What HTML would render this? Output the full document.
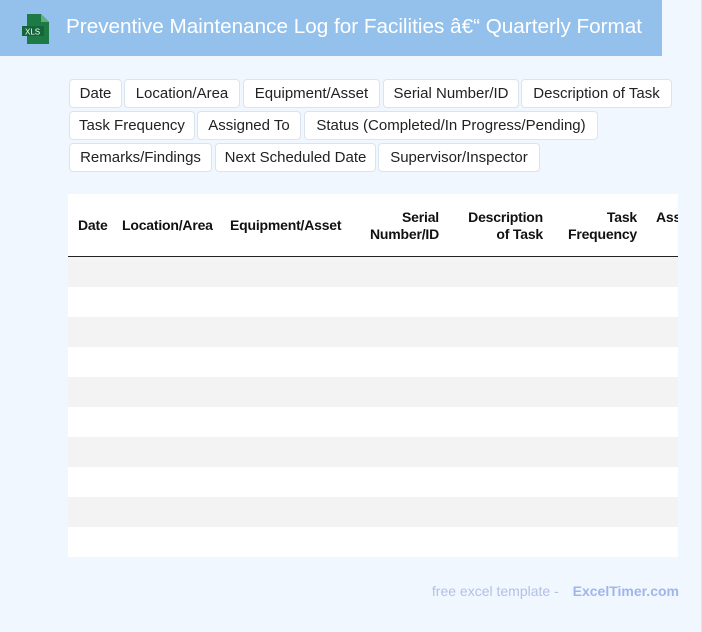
<!DOCTYPE html>
<html><head><meta charset="utf-8"><style>
*{margin:0;padding:0;box-sizing:border-box}
body{width:702px;height:632px;background:#f0f7ff;font-family:"Liberation Sans",Arial,sans-serif;position:relative;overflow:hidden;border-right:1px solid #dfe6ee}
.hdr{position:absolute;left:0;top:0;width:662px;height:56px;background:#93c1ec}
.hdr h1{position:absolute;left:66px;top:15px;color:#fff;font-weight:normal;font-size:20.7px;white-space:nowrap}
.tag{position:absolute;height:29px;background:#fff;border:1px solid #dbe4ee;border-radius:4px;font-size:15px;color:#222;line-height:27px;text-align:center;white-space:nowrap}
.tbl{position:absolute;left:68px;top:194px;width:610px;height:363px;background:#fff;overflow:hidden}
.th{position:absolute;font-weight:bold;font-size:14px;color:#111;line-height:17px;white-space:nowrap;letter-spacing:-0.2px}
.line{position:absolute;left:0;top:62px;width:610px;height:1px;background:#222}
.row{position:absolute;left:0;width:610px;height:30px}
.foot{position:absolute;top:583px;right:22px;font-size:14px;color:#b3c0e6}
.foot b{color:#a2b5ea;margin-left:10px}
</style></head><body>
<div class="hdr">
<svg style="position:absolute;left:22px;top:14px" width="28" height="30" viewBox="0 0 28 30"><path d="M5 0h14l8 8v22H5z" fill="#1e7a45"/><path d="M19 0v8h8z" fill="#5fae7d"/><rect x="0" y="12" width="22" height="10" fill="#14663a"/><text x="3" y="20.5" font-size="8" fill="#fff" font-family="Liberation Sans">XLS</text></svg>
<h1>Preventive Maintenance Log for Facilities â€“ Quarterly Format</h1>
</div>
<div class="tag" style="left:69px;top:79px;width:53px">Date</div>
<div class="tag" style="left:124px;top:79px;width:116px">Location/Area</div>
<div class="tag" style="left:243px;top:79px;width:137px">Equipment/Asset</div>
<div class="tag" style="left:383px;top:79px;width:136px">Serial Number/ID</div>
<div class="tag" style="left:521px;top:79px;width:151px">Description of Task</div>
<div class="tag" style="left:69px;top:111px;width:126px">Task Frequency</div>
<div class="tag" style="left:197px;top:111px;width:104px">Assigned To</div>
<div class="tag" style="left:304px;top:111px;width:294px">Status (Completed/In Progress/Pending)</div>
<div class="tag" style="left:69px;top:143px;width:143px">Remarks/Findings</div>
<div class="tag" style="left:215px;top:143px;width:161px">Next Scheduled Date</div>
<div class="tag" style="left:378px;top:143px;width:162px">Supervisor/Inspector</div>
<div class="tbl">
<div class="th" style="left:10px;top:23px">Date</div>
<div class="th" style="left:54px;top:23px">Location/Area</div>
<div class="th" style="left:162px;top:23px">Equipment/Asset</div>
<div class="th" style="right:239px;top:15px;text-align:right">Serial<br>Number/ID</div>
<div class="th" style="right:135px;top:15px;text-align:right">Description<br>of Task</div>
<div class="th" style="right:41px;top:15px;text-align:right">Task<br>Frequency</div>
<div class="th" style="left:588px;top:15px">Assigned</div>
<div class="line"></div>
<div class="row" style="top:63px;background:#f3f3f3"></div>
<div class="row" style="top:123px;background:#f3f3f3"></div>
<div class="row" style="top:183px;background:#f3f3f3"></div>
<div class="row" style="top:243px;background:#f3f3f3"></div>
<div class="row" style="top:303px;background:#f3f3f3"></div>
</div>
<div class="foot">free excel template - <b>ExcelTimer.com</b></div>
</body></html>
